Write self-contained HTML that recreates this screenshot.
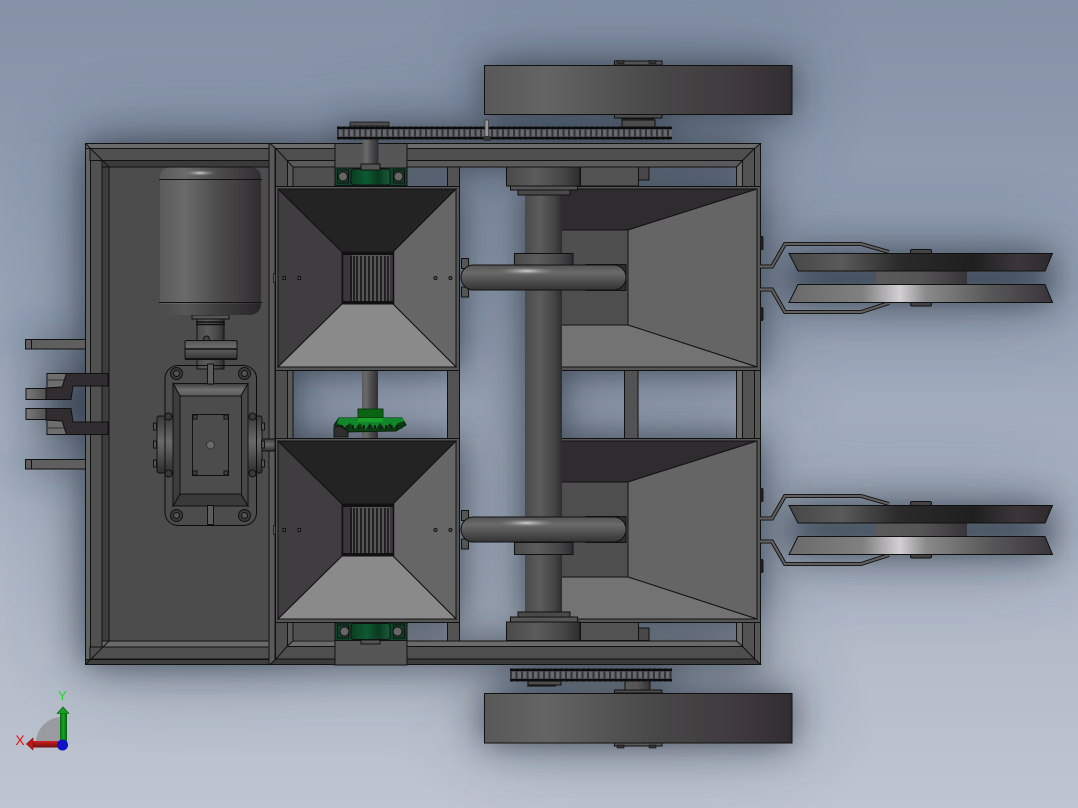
<!DOCTYPE html>
<html><head><meta charset="utf-8"><style>html,body{margin:0;padding:0;background:#8f9bad}svg{display:block}</style></head><body>
<svg width="1078" height="808" viewBox="0 0 1078 808" xmlns="http://www.w3.org/2000/svg">
<defs>
<linearGradient id="bg" x1="0" y1="0" x2="0" y2="1"><stop offset="0" stop-color="#8491a6"/><stop offset=".35" stop-color="#97a3b6"/><stop offset=".7" stop-color="#aeb7c6"/><stop offset="1" stop-color="#bfc5d1"/></linearGradient>
<linearGradient id="cyl" x1="0" y1="0" x2="1" y2="0"><stop offset="0" stop-color="#5b5b5b"/><stop offset=".25" stop-color="#6a6a6a"/><stop offset=".6" stop-color="#4a4a4a"/><stop offset=".85" stop-color="#3d383b"/><stop offset="1" stop-color="#302c30"/></linearGradient>
<linearGradient id="wheel" x1="0" y1="0" x2="1" y2="0"><stop offset="0" stop-color="#585858"/><stop offset=".2" stop-color="#646464"/><stop offset=".55" stop-color="#484848"/><stop offset=".85" stop-color="#3e383c"/><stop offset="1" stop-color="#302c30"/></linearGradient>
<linearGradient id="axle" x1="0" y1="0" x2="1" y2="0"><stop offset="0" stop-color="#4a4a4a"/><stop offset=".4" stop-color="#5c5c5c"/><stop offset=".8" stop-color="#444"/><stop offset="1" stop-color="#2f2b2f"/></linearGradient>
<linearGradient id="pipe" x1="0" y1="0" x2="0" y2="1"><stop offset="0" stop-color="#545454"/><stop offset=".3" stop-color="#6a6a6a"/><stop offset=".7" stop-color="#4a4a4a"/><stop offset="1" stop-color="#333"/></linearGradient>
<radialGradient id="hl" cx=".5" cy=".5" r=".5"><stop offset="0" stop-color="#d5d5d5"/><stop offset=".5" stop-color="#9a9a9a" stop-opacity=".6"/><stop offset="1" stop-color="#777" stop-opacity="0"/></radialGradient>
<linearGradient id="d1" x1="0" y1="0" x2="1" y2="0"><stop offset="0" stop-color="#474747"/><stop offset=".2" stop-color="#5a5a5a"/><stop offset=".42" stop-color="#2a2a2a"/><stop offset=".7" stop-color="#1f1f1f"/><stop offset=".87" stop-color="#3c363a"/><stop offset="1" stop-color="#2d292d"/></linearGradient>
<linearGradient id="d2" x1="0" y1="0" x2="1" y2="0"><stop offset="0" stop-color="#6a6a6a"/><stop offset=".28" stop-color="#808080"/><stop offset=".42" stop-color="#d2d0d4"/><stop offset=".52" stop-color="#8a8a8a"/><stop offset=".75" stop-color="#5a5a5a"/><stop offset="1" stop-color="#39343a"/></linearGradient>
<linearGradient id="hub" x1="0" y1="0" x2="1" y2="0"><stop offset="0" stop-color="#5a5a5a"/><stop offset=".5" stop-color="#555"/><stop offset="1" stop-color="#383438"/></linearGradient>
<linearGradient id="gb" x1="0" y1="0" x2="0" y2="1"><stop offset="0" stop-color="#3d3d3d"/><stop offset=".5" stop-color="#6f6f6f"/><stop offset="1" stop-color="#5a5a5a"/></linearGradient>
<linearGradient id="cov" x1="0" y1="0" x2="0" y2="1"><stop offset="0" stop-color="#3a3a3a"/><stop offset=".45" stop-color="#6a6a6a"/><stop offset="1" stop-color="#2e2e2e"/></linearGradient>
<linearGradient id="grn" x1="0" y1="0" x2="1" y2="0"><stop offset="0" stop-color="#0b3d22"/><stop offset=".4" stop-color="#0d5a30"/><stop offset=".7" stop-color="#0b3a22"/><stop offset="1" stop-color="#1a5a3a"/></linearGradient>
<linearGradient id="bar" x1="0" y1="0" x2="1" y2="0"><stop offset="0" stop-color="#787878"/><stop offset="1" stop-color="#505050"/></linearGradient>
<linearGradient id="gs" x1="0" y1="0" x2="1" y2="0"><stop offset="0" stop-color="#0b6a14"/><stop offset=".5" stop-color="#14a822"/><stop offset="1" stop-color="#0a5a12"/></linearGradient>
<linearGradient id="rs" x1="0" y1="0" x2="0" y2="1"><stop offset="0" stop-color="#d02020"/><stop offset="1" stop-color="#6e1010"/></linearGradient>
<filter id="b" x="-40%" y="-40%" width="180%" height="180%"><feGaussianBlur stdDeviation="17"/></filter>
<filter id="b2" x="-40%" y="-40%" width="180%" height="180%"><feGaussianBlur stdDeviation="42"/></filter>

<g id="sh">
<rect x="85" y="143" width="208" height="522"/>
<rect x="275" y="143" width="485" height="24"/>
<rect x="275" y="641" width="485" height="24"/>
<rect x="275" y="186" width="184" height="184"/>
<rect x="275" y="438" width="184" height="184"/>
<rect x="560" y="186" width="200" height="184"/>
<rect x="560" y="438" width="200" height="184"/>
<rect x="525" y="186" width="37" height="436"/>
<rect x="484" y="65" width="308" height="49"/>
<rect x="484" y="693" width="308" height="50"/>
<rect x="336" y="126" width="336" height="14"/>
<rect x="510" y="668" width="162" height="14"/>
<rect x="789" y="253" width="263" height="50"/>
<rect x="789" y="505" width="263" height="50"/>
<rect x="25" y="339" width="60" height="10"/><rect x="25" y="459" width="60" height="10"/>
<rect x="46" y="373" width="40" height="62"/>
</g>

<g id="hopL" stroke="#111" stroke-width="1">
<rect x="275.5" y="186.5" width="184" height="184" fill="#555"/>
<polygon points="278,189 456,189 393,252 342,252" fill="#232323"/>
<polygon points="278,189 342,252 342,304 278,367" fill="#3f3d3f"/>
<polygon points="456,189 393,252 393,304 456,367" fill="#666"/>
<polygon points="278,367 342,304 393,304 456,367" fill="#8a8a8a"/>
<rect x="342.5" y="252.5" width="51" height="51" fill="#3a373a" stroke-width="1.5"/>
<rect x="352" y="255" width="38" height="46" fill="#565656" stroke="none"/>
<g stroke="#141414" stroke-width="1.6"><path d="M351 256v45M354 256v45M357 256v45M361 256v45M365 256v45M369 256v45M373 256v45M377 256v45M381 256v45M385 256v45M388 256v45"/></g>
<path d="M342 254H393M342 302H393" stroke="#111" stroke-width="2"/>
<g fill="#555" stroke-width="1"><rect x="283" y="276.5" width="2.5" height="3"/><rect x="298" y="276.5" width="2.5" height="3"/><circle cx="435.5" cy="278" r="1.6"/><circle cx="450.5" cy="278" r="1.6"/></g>
<rect x="273.5" y="273.5" width="2" height="9" fill="#555" stroke-width=".7"/>
</g>

<g id="hopR" stroke="#111" stroke-width="1">
<rect x="560" y="186.5" width="200.5" height="184" fill="#555"/>
<polygon points="560,189 757,189 628,230 560,230" fill="#2f2c2f"/>
<polygon points="560,230 628,230 628,325 560,325" fill="#4e4e4e"/>
<polygon points="628,230 757,189 757,367 628,325" fill="#656565"/>
<polygon points="560,325 628,325 757,367 560,367" fill="#737373"/>
</g>

<g id="wheels">
<g fill="none" stroke="#111" stroke-width="4"><path d="M760 266.5H772L785 244H861L889 252"/><path d="M760 289.5H772L785 312H861L889 303"/></g>
<g fill="none" stroke="#5f5f5f" stroke-width="2.2"><path d="M760 266.5H772L785 244H861L889 252"/><path d="M760 289.5H772L785 312H861L889 303"/></g>
<rect x="910.5" y="249.5" width="21" height="5" rx="1.5" fill="#444" stroke="#111"/>
<rect x="910.5" y="301" width="21" height="5" rx="1.5" fill="#444" stroke="#111"/>
<rect x="876" y="271" width="91" height="14" fill="url(#hub)"/>
<polygon points="789,253.5 1052.5,253.5 1045,271 798,271" fill="url(#d1)" stroke="#111"/>
<polygon points="798,284.5 1045,284.5 1052.5,302.5 789,302.5" fill="url(#d2)" stroke="#111"/>
</g>

<g id="pipeU">
<rect x="586" y="264.5" width="40" height="26" fill="#2f2c2f" stroke="#111"/>
<g fill="#555" stroke="#111"><rect x="461.5" y="258.5" width="7" height="10"/><rect x="461.5" y="287" width="7" height="10"/></g>
<rect x="461" y="265" width="165" height="25" rx="12.5" fill="url(#pipe)" stroke="#111"/>
<ellipse cx="527" cy="271" rx="30" ry="4" fill="url(#hl)"/>
</g>
</defs>

<rect width="1078" height="808" fill="url(#bg)"/>

<!-- soft shadow -->
<use href="#sh" fill="#28313f" filter="url(#b2)" opacity=".45"/>
<use href="#sh" fill="#28313f" filter="url(#b)" opacity=".7"/>

<!-- left side arms -->
<g stroke="#111" stroke-width="1">
<rect x="25.5" y="339.5" width="60" height="9.5" fill="#5f5f5f"/><path d="M31.5 339.5v9.5"/>
<rect x="25.5" y="459.5" width="60" height="9.5" fill="#5f5f5f"/><path d="M31.5 459.5v9.5"/>
<rect x="26" y="388.5" width="21" height="11" fill="url(#bar)"/>
<rect x="26" y="408.5" width="21" height="11" fill="url(#bar)"/>
<polygon points="47,373.5 66,373.5 66,387 47,388" fill="#6e6e6e"/>
<polygon points="47,434.5 66,434.5 66,421 47,420" fill="#6e6e6e"/>
<path d="M48 380H64M48 428H64" stroke="#333"/>
</g>

<!-- left bay -->
<rect x="109" y="167" width="160" height="474" fill="#4c4c4c"/>
<g stroke="#111" stroke-width="1">
<rect x="102" y="160" width="7" height="488" fill="#3d3d3d"/>
<rect x="90" y="148" width="12" height="512" fill="#505050"/>
<rect x="85.5" y="143.5" width="5" height="521" fill="#636363"/>
<rect x="90" y="148.5" width="180" height="12" fill="#505050"/>
<rect x="102" y="160.5" width="167" height="6.5" fill="#3b3b3b"/>
<rect x="85.5" y="143.5" width="184" height="5" fill="#6a6a6a"/>
<rect x="102" y="641" width="167" height="6" fill="#6a6a6a"/>
<rect x="90" y="647" width="180" height="12" fill="#4e4e4e"/>
<rect x="85.5" y="659.5" width="184" height="5" fill="#3f3f3f"/>
<path d="M85.5 143.5L109 167M85.5 664.5L109 641" fill="none"/>
</g>

<!-- band in right bay -->
<rect x="293" y="167" width="42" height="19" fill="#4f4f4f"/>
<rect x="293" y="622" width="42" height="18" fill="#505050"/>
<rect x="407" y="167" width="40" height="19" fill="#596170" opacity=".8"/>

<!-- vertical struts -->
<g stroke="#111" stroke-width="1" fill="#525252">
<rect x="269" y="143.5" width="6" height="521" fill="#5a5a5a"/>
<rect x="275.5" y="143.5" width="12" height="521" fill="#4e4e4e"/>
<rect x="287.5" y="160" width="5.5" height="488" fill="#585858"/>
<rect x="447.5" y="167" width="12" height="474"/>
<rect x="624.5" y="167" width="13.5" height="474"/>
<rect x="736.5" y="160" width="6" height="488" fill="#6a6a6a"/>
<rect x="742.5" y="148" width="12" height="512"/>
<rect x="754.5" y="143.5" width="6" height="521" fill="#565656"/>
</g>

<!-- frame top / bottom -->
<g stroke="#111" stroke-width="1">
<polygon points="270,143.5 760.5,143.5 754.5,148.5 276,148.5" fill="#6b6b6b"/>
<polygon points="276,148.5 754.5,148.5 742.5,160.5 287,160.5" fill="#4e4e4e"/>
<polygon points="287,160.5 742.5,160.5 736.5,167 293,167" fill="#5a5a5a"/>
<polygon points="293,641 736.5,641 742.5,646.5 287,646.5" fill="#6a6a6a"/>
<polygon points="287,646.5 742.5,646.5 754.5,659 276,659" fill="#4e4e4e"/>
<polygon points="276,659 754.5,659 760.5,664.5 270,664.5" fill="#3b3b3b"/>
</g>

<!-- right bay plates -->
<g stroke="#111" stroke-width="1">
<rect x="580.5" y="167" width="58" height="19" fill="#525252"/>
<rect x="638.5" y="167" width="10.5" height="13" fill="#4a4649"/>
<rect x="580.5" y="622" width="58" height="18.5" fill="#525252"/>
<rect x="638.5" y="628" width="10.5" height="12.5" fill="#4a4649"/>
</g>

<!-- middle shaft and gear -->
<rect x="362" y="370" width="16" height="68" fill="url(#cyl)"/>
<rect x="358" y="409" width="25" height="10" fill="#0a6414" stroke="#0a3a10"/>
<polygon points="334,425 339,418 402,418 406,425 396,431 346,432" fill="#0a3d12" stroke="#06220a"/>
<polygon points="339,418 402,418 405,421 398,423 394,428 390,423 385,429 380,423 375,430 370,423 365,430 360,423 355,429 350,423 345,427 337,423" fill="#12862a"/>
<rect x="358" y="418" width="25" height="4" fill="#19a02c"/>
<path d="M341 427L402 427" stroke="#141f14" stroke-width="4" stroke-dasharray="2 3.500"/>
<polygon points="334,427 340,426 348,431 348,437 334,437" fill="#2e2e2e" stroke="#111"/>

<use href="#hopR"/>
<use href="#hopR" y="252"/>
<use href="#hopL"/>
<use href="#hopL" y="252"/>

<!-- main axle -->
<rect x="525" y="190" width="37" height="430" fill="url(#axle)"/>
<g stroke="#111" stroke-width="1">
<rect x="506.5" y="167" width="73.5" height="19" fill="url(#axle)"/>
<rect x="510.5" y="186" width="67" height="4" fill="#555"/>
<rect x="518" y="190" width="52" height="5" fill="#4a4a4a"/>
<rect x="506.5" y="622" width="73.5" height="18.5" fill="url(#axle)"/>
<rect x="510.5" y="617" width="67" height="5" fill="#555"/>
<rect x="518" y="612" width="52" height="5" fill="#4a4a4a"/>
<rect x="514.5" y="253.5" width="58.5" height="12" fill="url(#axle)"/>
<rect x="514.5" y="542.5" width="58.5" height="12" fill="url(#axle)"/>
</g>
<use href="#pipeU"/>
<use href="#pipeU" y="252"/>

<!-- bearing blocks -->
<g stroke="#111" stroke-width="1">
<rect x="335" y="143.5" width="72" height="25" fill="#565656"/>
<rect x="362.5" y="128" width="16" height="40" fill="url(#cyl)" stroke="none"/>
<rect x="335" y="168" width="72" height="17.5" fill="#0c4528"/>
<rect x="337.5" y="170" width="11" height="13" fill="#153d2b"/>
<rect x="393.5" y="170" width="11" height="13" fill="#153d2b"/>
<circle cx="343" cy="176.5" r="4.5" fill="#666"/><circle cx="398.5" cy="176.5" r="4.5" fill="#666"/>
<rect x="351" y="169" width="39" height="16" rx="3" fill="url(#grn)"/>
<rect x="361" y="164" width="19" height="6" fill="#555"/>

<rect x="335" y="640" width="72" height="25" fill="#565656"/>
<rect x="335" y="623" width="72" height="17.5" fill="#0c4528"/>
<rect x="337.5" y="625" width="11" height="13" fill="#153d2b"/>
<rect x="393.5" y="625" width="11" height="13" fill="#153d2b"/>
<circle cx="344.5" cy="631.5" r="4.5" fill="#666"/><circle cx="397.5" cy="631.5" r="4.5" fill="#666"/>
<rect x="351" y="623.5" width="39" height="16" rx="3" fill="url(#grn)"/>
<rect x="361" y="640" width="19" height="4" fill="#555"/>
</g>

<!-- motor -->
<g stroke="#111" stroke-width="1">
<rect x="192" y="315" width="37" height="4" fill="#555"/>
<rect x="197" y="319" width="27" height="50" fill="url(#axle)"/>
<path d="M196 322H225M196 324.5H225" stroke-width="1.5"/>
<circle cx="206.5" cy="339" r="3" fill="#444"/>
<rect x="185" y="340.5" width="52" height="19" rx="1.5" fill="url(#pipe)"/>
<path d="M185 349H237" stroke-width="1.5"/>
<path d="M185 359H237" stroke-width="2"/>
</g>
<path d="M171 167.5H250C258 167.5 261 172 261 178V304C261 311 256 315 249 315H172C165 315 160 311 160 304V178C160 172 163 167.5 171 167.5Z" fill="url(#cyl)"/>
<path d="M159 179.5H262M159 302.5H262" stroke="#111" stroke-width="1"/>
<path d="M160 304C161 311 165 315 172 315H249C256 315 260 311 261 304Z" fill="#000" opacity=".18"/>
<ellipse cx="200" cy="173" rx="16" ry="3" fill="url(#hl)"/>

<!-- gearbox -->
<g stroke="#111" stroke-width="1">
<rect x="262" y="439" width="13" height="12" fill="url(#cov)"/>
<rect x="157" y="416" width="16" height="57" rx="2" fill="url(#cov)"/>
<rect x="248" y="416" width="14" height="57" rx="2" fill="url(#cov)"/>
<g fill="#555"><rect x="153.5" y="423" width="3" height="7"/><rect x="153.5" y="441" width="3" height="7"/><rect x="153.5" y="460" width="3" height="7"/><rect x="261.5" y="423" width="3" height="7"/><rect x="261.5" y="441" width="3" height="7"/><rect x="261.5" y="460" width="3" height="7"/></g>
<rect x="165" y="365.5" width="91.5" height="160" rx="13" fill="none" stroke="#0c0c0c"/>
<polygon points="173,383.5 248,383.5 241,396 180,396" fill="url(#gb)"/>
<polygon points="173,506 248,506 241,494 180,494" fill="#3a3a3a"/>
<polygon points="173,383.5 180,396 180,494 173,506" fill="#3d3d3d"/>
<polygon points="248,383.5 241,396 241,494 248,506" fill="#474747"/>
<rect x="180" y="396" width="61.5" height="98" fill="#4c4c4c"/>
<rect x="192.5" y="414.5" width="36" height="61" fill="#4c4c4c"/>
<g fill="#444"><rect x="193" y="415" width="4" height="4"/><rect x="224" y="415" width="4" height="4"/><rect x="193" y="471" width="4" height="4"/><rect x="224" y="471" width="4" height="4"/></g>
<rect x="207.5" y="364" width="6" height="20" fill="#5c5c5c"/>
<rect x="207.5" y="505.5" width="6" height="19" fill="#5c5c5c"/>
<g fill="#3a3a3a"><circle cx="176.5" cy="373.5" r="6"/><circle cx="244.5" cy="373.5" r="6"/><circle cx="176.5" cy="515.5" r="6"/><circle cx="244.5" cy="515.5" r="6"/><circle cx="168.5" cy="416.5" r="3.5"/><circle cx="252.5" cy="416.5" r="3.5"/><circle cx="168.5" cy="473.5" r="3.5"/><circle cx="252.5" cy="473.5" r="3.5"/></g>
<g fill="#555"><circle cx="176.5" cy="373.5" r="3"/><circle cx="244.5" cy="373.5" r="3"/><circle cx="176.5" cy="515.5" r="3"/><circle cx="244.5" cy="515.5" r="3"/></g>
<circle cx="210.5" cy="445" r="4" fill="#6a6a6a" stroke="#333"/>
</g>

<!-- forks over frame -->
<polygon points="66.5,373.5 108,373.5 108,386 73,386 71,399.5 46,399.5 46,388 62,387" fill="#302c30" stroke="#111"/>
<polygon points="66.5,434.5 108,434.5 108,422 73,422 71,408.5 46,408.5 46,420 62,421" fill="#302c30" stroke="#111"/>

<!-- wheels top/bottom -->
<g stroke="#111" stroke-width="1">
<rect x="625" y="114" width="27" height="15" fill="url(#hub)"/>
<rect x="614.5" y="61" width="47.5" height="4" fill="#555"/>
<rect x="614.5" y="114" width="47.5" height="4" fill="#4c4c4c"/>
<path d="M621 118.5H655" stroke-width="1.5"/>
<rect x="622" y="120" width="33" height="7" fill="#4d4d4d"/>
<rect x="484.5" y="65.5" width="307.5" height="49" fill="url(#wheel)"/>
<rect x="625" y="680" width="25" height="12" fill="url(#hub)"/>
<rect x="614.5" y="690" width="47.5" height="3" fill="#4c4c4c"/>
<rect x="528" y="681" width="33" height="4" fill="#4d4d4d"/>
<path d="M527 686H556"/>
<rect x="614.5" y="743" width="47.5" height="3" fill="#5a5a5a"/>
<rect x="484.5" y="693.5" width="307.5" height="49.5" fill="url(#wheel)"/>
</g>
<g fill="#333" stroke="#111" stroke-width=".6"><rect x="617" y="60.5" width="7" height="3"/><rect x="649" y="60.5" width="7" height="3"/><rect x="617" y="745" width="7" height="3"/><rect x="649" y="745" width="7" height="3"/></g>

<!-- chains -->
<rect x="337" y="128" width="335" height="10" fill="#66676f"/>
<path d="M337 133H672" stroke="#33333a" stroke-width="7" stroke-dasharray="2 3.500"/>
<path d="M337 128H672M337 138H672" stroke="#0c0c0c" stroke-width="2.400"/>
<path d="M337 127H672M337 139H672" stroke="#0c0c0c" stroke-width="1" stroke-dasharray="3.500 2"/>
<rect x="350" y="122" width="39" height="4" fill="#4c4c4c" stroke="#111" stroke-width=".7"/>
<rect x="485" y="120" width="3.500" height="17" fill="#999" stroke="#333" stroke-width=".7"/>
<rect x="483.500" y="136" width="7" height="5" fill="#333"/>
<rect x="510" y="670" width="162" height="10" fill="#66676f"/>
<path d="M510 675H672" stroke="#33333a" stroke-width="7" stroke-dasharray="2 3.500"/>
<path d="M510 670H672M510 680H672" stroke="#0c0c0c" stroke-width="2.400"/>
<path d="M510 669H672M510 681H672" stroke="#0c0c0c" stroke-width="1" stroke-dasharray="3.500 2"/>

<!-- right wheel assemblies -->
<g fill="#1c1c1c"><rect x="760" y="236" width="3.500" height="14" rx="1.500"/><rect x="760" y="307" width="3.500" height="14" rx="1.500"/><rect x="760" y="488" width="3.500" height="14" rx="1.500"/><rect x="760" y="559" width="3.500" height="14" rx="1.500"/></g>
<use href="#wheels"/>
<use href="#wheels" y="252"/>

<!-- triad -->
<path d="M62 743V717A26 26 0 0 0 36 743Z" fill="#9a9ba0"/>
<rect x="60" y="712" width="7" height="33" fill="url(#gs)"/>
<polygon points="57,713.500 69,713.500 63,707" fill="#14a020" stroke="#0a5a10" stroke-width=".6"/>
<rect x="32" y="741" width="30" height="6.500" fill="url(#rs)"/>
<polygon points="33,738 33,750 26.500,744" fill="#c01818" stroke="#7a0e0e" stroke-width=".6"/>
<circle cx="62.500" cy="745" r="5.500" fill="#1010c8"/>
<text x="62.500" y="700" font-family="'Liberation Sans',sans-serif" font-size="13" fill="#18e018" text-anchor="middle">Y</text>
<text x="20" y="745" font-family="'Liberation Sans',sans-serif" font-size="14" fill="#e81010" text-anchor="middle">X</text>
</svg>
</body></html>
